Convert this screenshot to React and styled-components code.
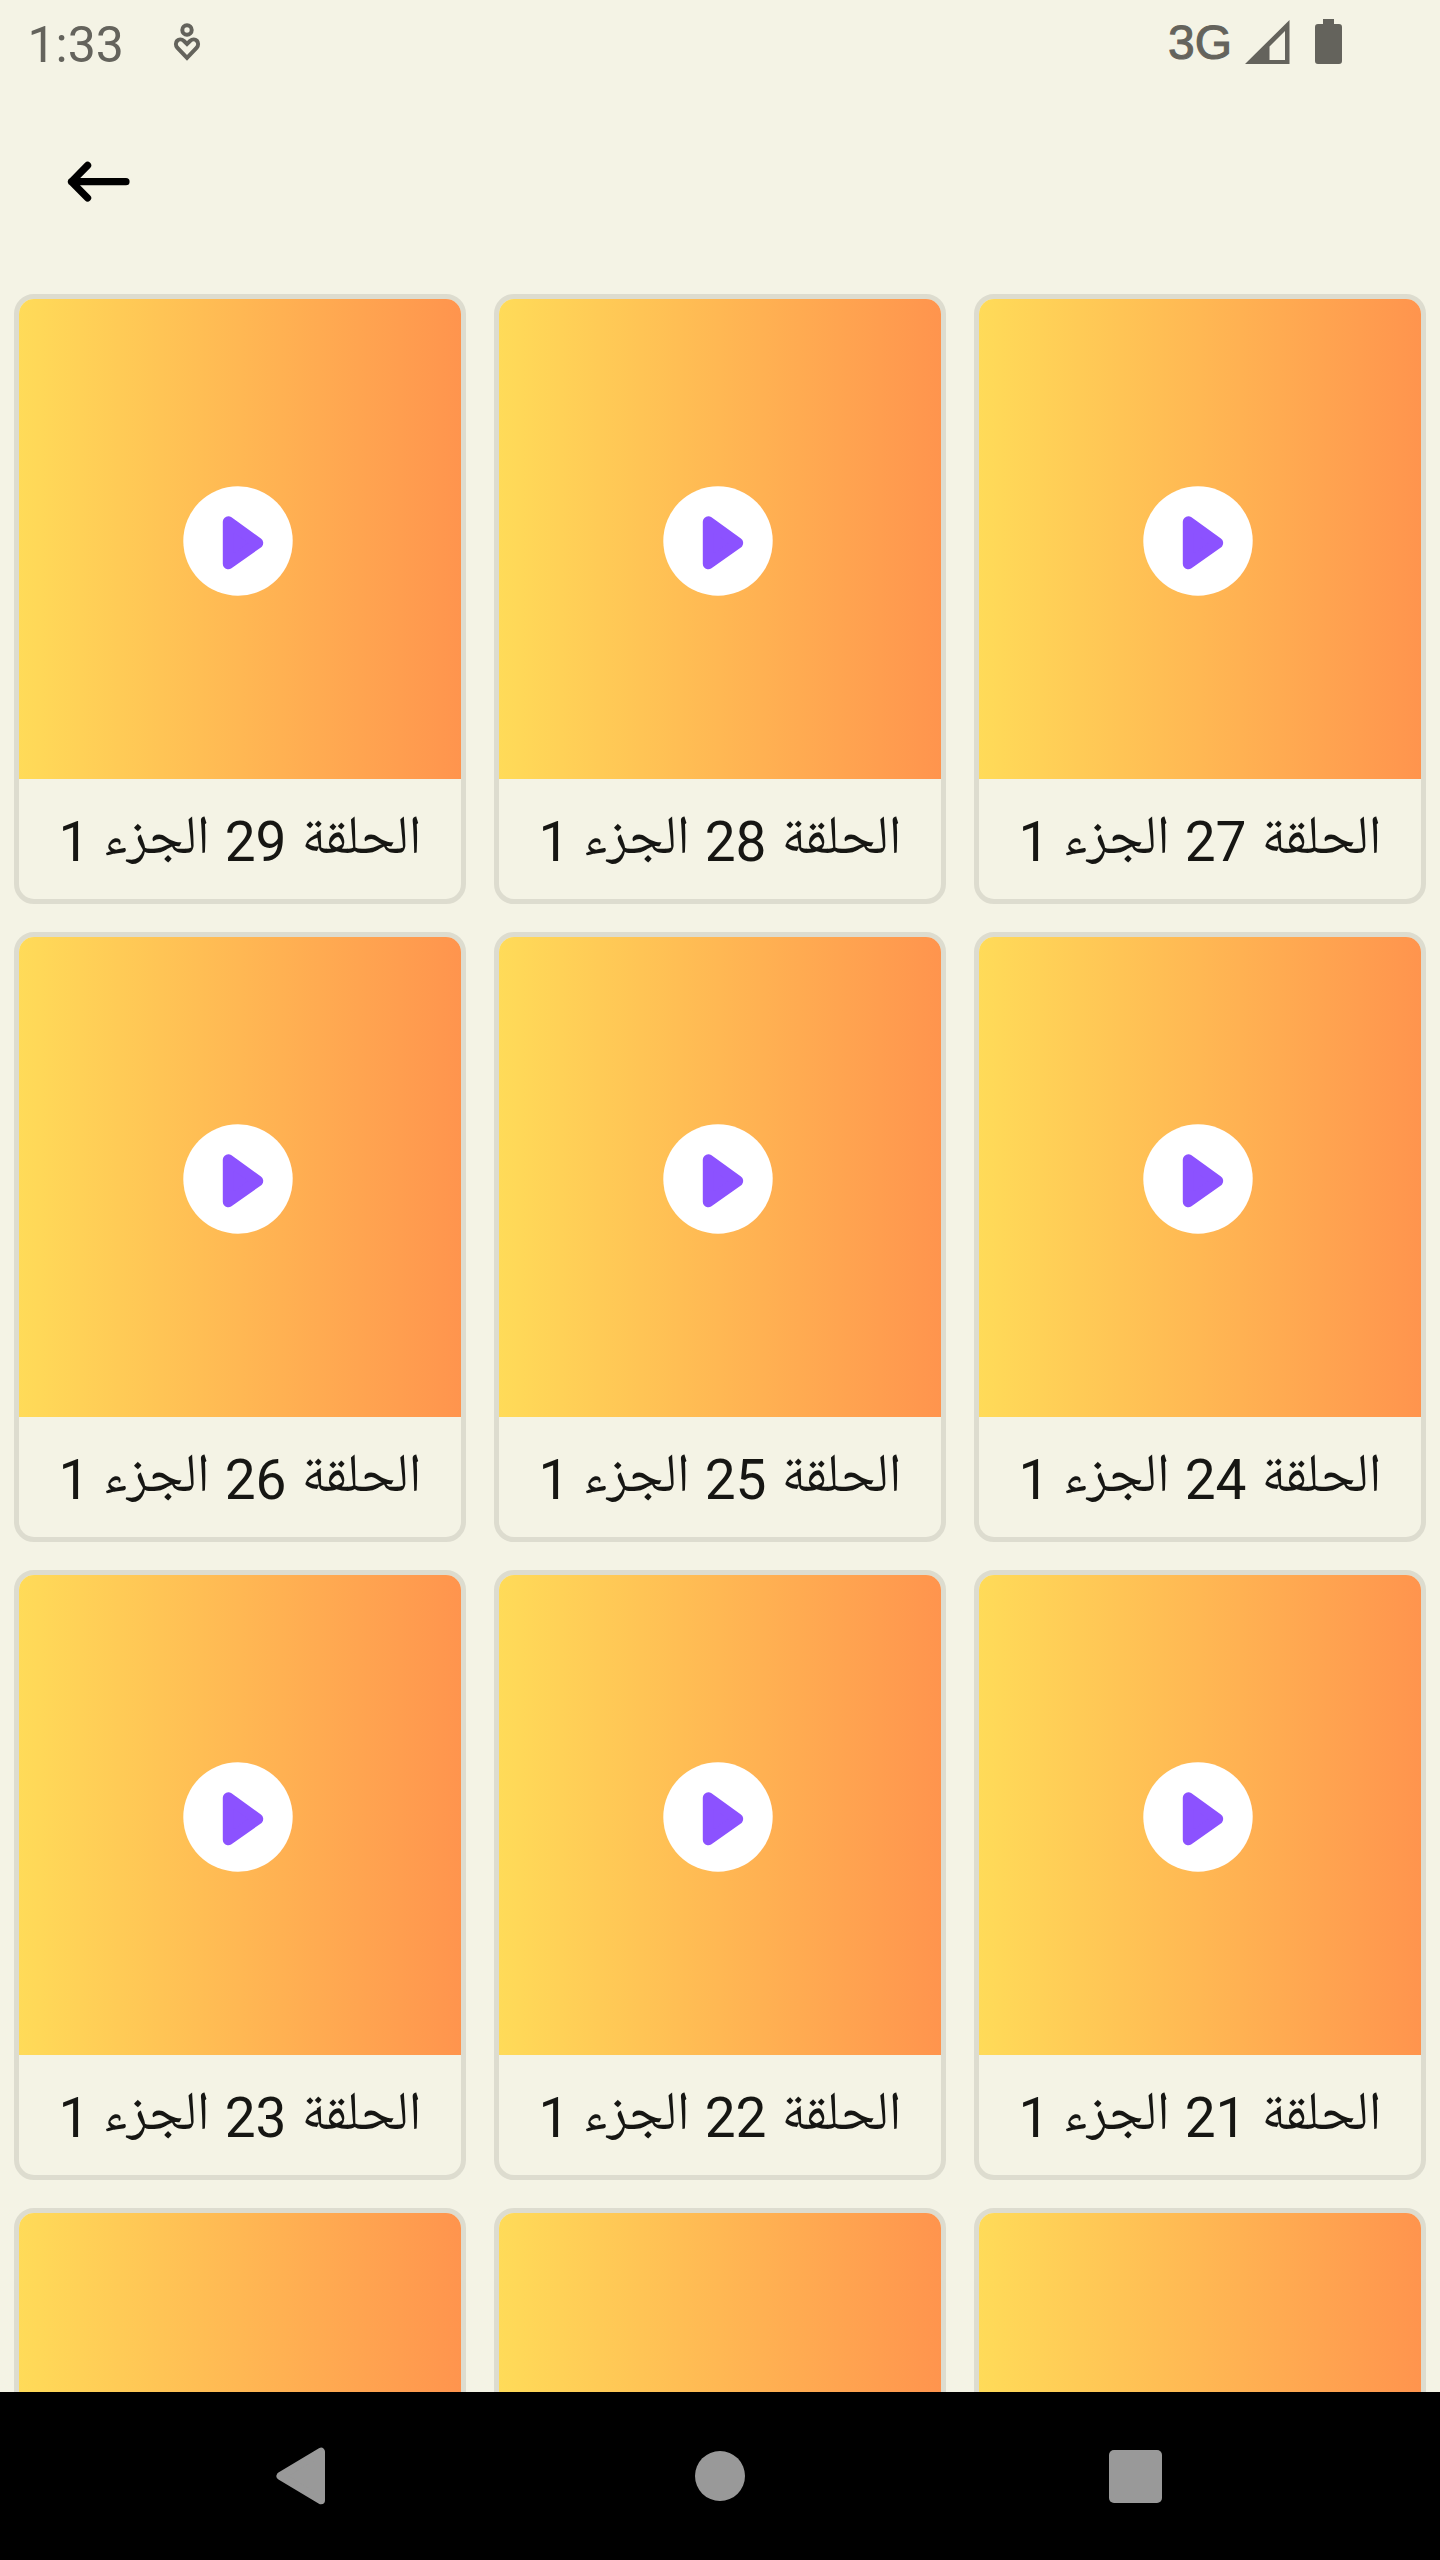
import React from 'react';
import styled, { createGlobalStyle } from 'styled-components';

const COLORS = {
  background: '#f4f3e5',
  border: '#dddccf',
  status: '#64635c',
  text: '#161613',
  nav: '#999999',
  play: '#8c52ff',
};

const EPISODES = [29, 28, 27, 26, 25, 24, 23, 22, 21];

// next row, only the thumbnails peek in above the nav bar
const UPCOMING = [20, 19, 18];

const App = () => {
  return (
    <Screen>
      <GlobalStyle />
      <StatusBar>
        <StatusSide>
          <Clock>1:33</Clock>
          <CareIcon />
        </StatusSide>
        <StatusSide>
          <Network>3G</Network>
          <SignalIcon />
          <BatteryIcon />
        </StatusSide>
      </StatusBar>
      <Header>
        <BackButton aria-label="Back">
          <svg width="64" height="42" viewBox="0 0 64 42" fill="none" stroke="#000" strokeWidth="7.2" strokeLinecap="round" strokeLinejoin="round">
            <path d="M20.600 4.400L4.500 20.700L20.600 37M4.500 20.700H59" />
            <path d="M6 20.700L13 14V27.400Z" fill="#000" stroke="none" />
          </svg>
        </BackButton>
      </Header>
      <Grid>
        {EPISODES.map((number) => (
          <EpisodeCard key={number} number={number} />
        ))}
        {UPCOMING.map((number) => (
          <EpisodeCard key={number} />
        ))}
      </Grid>
      <NavBar>
        <NavButton aria-label="Back">
          <svg width="50" height="58" viewBox="0 0 50 58">
            <path d="M45 4.700V53.300L4.500 29Z" fill={COLORS.nav} stroke={COLORS.nav} strokeWidth="8" strokeLinejoin="round" />
          </svg>
        </NavButton>
        <HomeButton aria-label="Home">
          <HomeDot />
        </HomeButton>
        <NavButton aria-label="Recents">
          <RecentSquare />
        </NavButton>
      </NavBar>
    </Screen>
  );
};

const EpisodeCard = ({ number }) => {
  return (
    <Card>
      <Thumbnail>
        <svg width="110" height="110" viewBox="0 0 110 110">
          <circle cx="55" cy="55" r="54.700" fill="#fff" />
          <path d="M45.300 35.800L74.700 57L45.300 77.800Z" fill={COLORS.play} stroke={COLORS.play} strokeWidth="11" strokeLinejoin="round" />
        </svg>
      </Thumbnail>
      {number && (
        <Label dir="rtl">
          <Word $width={120}>الحلقة</Word>
          <Digits>{number}</Digits>
          <Word $width={105.3}>الجزء</Word>
          <Digits>1</Digits>
        </Label>
      )}
    </Card>
  );
};

const CareIcon = () => (
  <svg width="28" height="40" viewBox="0 0 28 40" fill="none" stroke={COLORS.status} strokeWidth="4">
    <circle cx="14" cy="8" r="4.700" />
    <path d="M14 35.800L4.500 26C0 20.500 6 14.500 11 19L14 22L17 19C22 14.500 28 20.500 23.500 26Z" />
  </svg>
);

const SignalIcon = () => (
  <Signal width="45" height="45" viewBox="0 0 45 45">
    <path d="M0 44L44.500 0V44ZM24.500 40H40V11L24.500 26.500Z" fillRule="evenodd" fill={COLORS.status} />
  </Signal>
);

const BatteryIcon = () => (
  <svg width="27" height="46" viewBox="0 0 27 46" fill={COLORS.status}>
    <path d="M8 0H19V5H24Q27 5 27 8V42Q27 45 24 45H3Q0 45 0 42V8Q0 5 3 5H8Z" />
  </svg>
);

const GlobalStyle = createGlobalStyle`
  * {
    box-sizing: border-box;
  }

  body {
    margin: 0;
    background: ${COLORS.background};
    font-family: Roboto, 'DejaVu Sans', sans-serif;
  }
`;

const Screen = styled.div`
  display: flex;
  flex-direction: column;
  width: 1440px;
  height: 2560px;
  overflow: hidden;
  background: ${COLORS.background};
`;

const StatusBar = styled.div`
  display: flex;
  justify-content: space-between;
  flex: none;
  height: 84px;
  padding: 0 98px 0 27.5px;
  color: ${COLORS.status};
`;

const StatusSide = styled.div`
  display: flex;
  align-items: center;
`;

const Clock = styled.span`
  width: 145.5px;
  padding-top: 5px;
  font-size: 50px;
`;

const Network = styled.span`
  font-family: 'Liberation Sans', Arial, sans-serif;
  font-size: 48px;
  -webkit-text-stroke: 1px ${COLORS.status};
`;

const Signal = styled.svg`
  margin: 0 25px 0 13px;
`;

const Header = styled.header`
  display: flex;
  align-items: center;
  flex: none;
  height: 196px;
  padding-left: 67px;
`;

const BackButton = styled.button`
  display: flex;
  padding: 0;
  border: 0;
  background: none;
`;

const Grid = styled.main`
  display: grid;
  grid-template-columns: repeat(3, 452px);
  grid-auto-rows: 610px;
  gap: 28px;
  flex: 1;
  min-height: 0;
  padding: 14px;
  overflow: hidden;
`;

const Card = styled.article`
  display: flex;
  flex-direction: column;
  border: 5px solid ${COLORS.border};
  border-radius: 20px;
  overflow: hidden;
`;

const Thumbnail = styled.div`
  display: flex;
  align-items: center;
  justify-content: center;
  flex: none;
  height: 480px;
  padding: 4px 5px 0 0;
  background: linear-gradient(90deg, #ffde59 -19px, #ff914d 462px);
`;

const Label = styled.div`
  display: flex;
  align-items: center;
  justify-content: center;
  gap: 15px;
  height: 120px;
  color: ${COLORS.text};
  font-size: 55px;
  white-space: nowrap;
`;

const Word = styled.span`
  width: ${(props) => props.$width}px;
  padding-top: 5px;
  font-family: 'Noto Naskh Arabic', 'Noto Sans Arabic', 'DejaVu Sans', sans-serif;
  font-size: 54.5px;
`;

const Digits = styled.span`
  padding-top: 6px;
`;

const NavBar = styled.nav`
  display: flex;
  align-items: center;
  justify-content: space-between;
  flex: none;
  height: 168px;
  padding: 0 278px 0 276px;
  background: #000;
`;

const NavButton = styled.button`
  display: flex;
  padding: 0;
  border: 0;
  background: none;
`;

const HomeButton = styled(NavButton)`
  padding-left: 5px;
`;

const HomeDot = styled.span`
  width: 50px;
  height: 50px;
  border-radius: 50%;
  background: ${COLORS.nav};
`;

const RecentSquare = styled.span`
  width: 53px;
  height: 53px;
  border-radius: 5px;
  background: ${COLORS.nav};
`;

export default App;
